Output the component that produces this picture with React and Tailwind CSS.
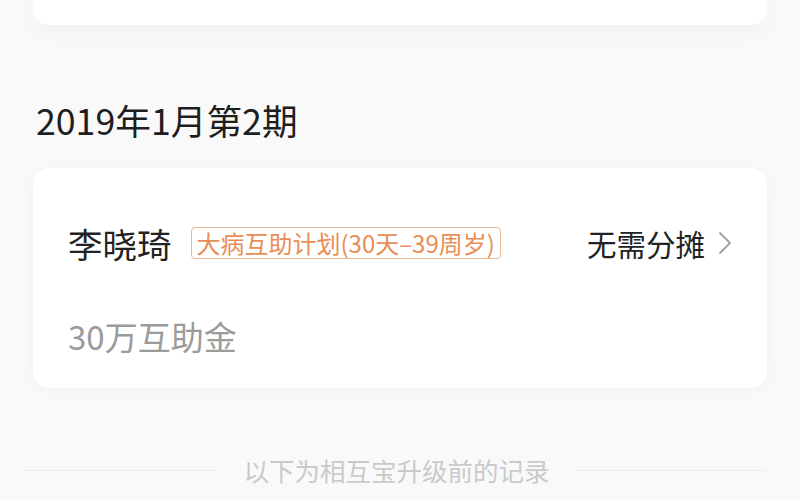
const font = { fontFamily: '"Noto Sans CJK SC", "Noto Sans", sans-serif' };

function Chevron() {
  return (
    <svg width="14" height="24" viewBox="0 0 14 24" className="ml-[13px]">
      <path d="M2 2l10 10-10 10" stroke="#a0a0a0" strokeWidth="1.8" fill="none" strokeLinecap="round" strokeLinejoin="round" />
    </svg>
  );
}

function RecordCard({ name, plan, status, amount }) {
  return (
    <div className="mx-[33px] mt-[28px] h-[220px] bg-white rounded-[16px] shadow-[0_2px_16px_rgba(0,0,0,0.03)] pl-[35px] pr-[35px] pt-[55px]">
      <div className="flex items-center h-[40px]">
        <span className="text-[34.5px] leading-[40px] text-[#222]">{name}</span>
        <span className="ml-[19px] h-[32px] px-[5px] flex items-center border border-[#ecb995] rounded-[4px] text-[24px] leading-[30px] text-[#e98d55]">{plan}</span>
        <span className="ml-auto text-[29.5px] leading-[40px] text-[#222]">{status}</span>
        <Chevron />
      </div>
      <div className="mt-[53px] text-[33px] leading-[40px] text-[#9b9b9b]">{amount}</div>
    </div>
  );
}

export default function App() {
  return (
    <div className="w-[800px] h-[500px] bg-[#f9f9f9] overflow-hidden" style={font}>
      <div className="mx-[33px] h-[25px] bg-white rounded-b-[16px] shadow-[0_6px_24px_rgba(0,0,0,0.04)]" />
      <h2 className="mt-[75px] pl-[36px] text-[35.7px] leading-[40px] font-normal text-[#1e1e1e]">2019年1月第2期</h2>
      <RecordCard name="李晓琦" plan="大病互助计划(30天–39周岁)" status="无需分摊" amount="30万互助金" />
      <div className="mt-[67px] flex items-center px-[22px] h-[30px]">
        <div className="w-[194px] h-px bg-[#ececec]" />
        <span className="mx-auto text-[25.5px] leading-[30px] text-[#cacaca]">以下为相互宝升级前的记录</span>
        <div className="w-[188px] h-px bg-[#ececec] mr-[13px]" />
      </div>
    </div>
  );
}
